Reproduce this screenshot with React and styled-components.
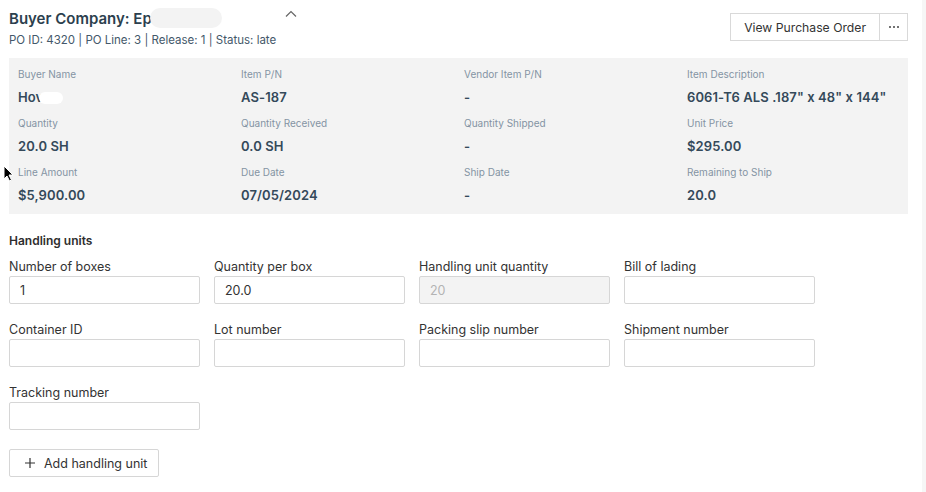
import React from "react";
import styled, { createGlobalStyle } from "styled-components";

const Global = createGlobalStyle`
  html, body { margin: 0; padding: 0; background: #fff; }
  body { font-family: Inter, "Noto Sans", Arial, sans-serif; -webkit-font-smoothing: antialiased; }
  * { box-sizing: border-box; }
`;

const Page = styled.div`
  display: flex;
  width: 926px;
  height: 492px;
  overflow: hidden;
  position: relative;
`;

const Main = styled.div`
  flex: 1;
  padding: 0 14px 0 9px;
`;

const Track = styled.div`
  width: 4px;
  background: #f6f6f6;
`;

const Header = styled.div`
  display: flex;
  justify-content: space-between;
  align-items: flex-start;
  padding-top: 7px;
  height: 58px;
`;

const TitleRow = styled.div`
  display: flex;
  align-items: center;
  height: 22px;
`;

const Title = styled.h1`
  margin: 0;
  font-size: 15px;
  font-weight: 600;
  color: #2c3f4e;
`;

const Blob = styled.span`
  display: inline-block;
  width: ${(p) => p.$w}px;
  height: ${(p) => p.$h}px;
  border-radius: ${(p) => p.$h / 2}px;
  background: ${(p) => p.$bg};
  vertical-align: middle;
  margin-left: ${(p) => p.$ml || 0}px;
`;

const Caret = styled.svg`
  margin-left: 63px;
  margin-top: -8px;
`;

const Sub = styled.div`
  margin-top: 4px;
  font-size: 11.5px;
  color: #44586a;
`;

const BtnGroup = styled.div`
  display: flex;
  margin-top: 6px;
`;

const GroupBtn = styled.button`
  height: 28px;
  padding: 0 ${(p) => p.$px}px;
  width: ${(p) => (p.$w ? `${p.$w}px` : "auto")};
  background: #fff;
  border: 1px solid #d9d9d9;
  margin-left: ${(p) => (p.$last ? "-1px" : "0")};
  font-family: inherit;
  font-size: 12.2px;
  color: #333;
  display: flex;
  align-items: center;
  justify-content: center;
`;

const Panel = styled.div`
  background: #f3f3f3;
  padding: 9px 9px 9px;
  display: grid;
  grid-template-columns: repeat(4, 212px);
  column-gap: 11px;
  row-gap: 9px;
`;

const Field = styled.div`
  display: flex;
  flex-direction: column;
`;

const InfoLabel = styled.div`
  font-size: 10px;
  color: #8493a3;
  height: 14px;
  line-height: 14px;
`;

const InfoValue = styled.div`
  margin-top: 7px;
  font-size: 13px;
  font-weight: 600;
  color: #34495a;
  height: 19px;
  line-height: 19px;
  letter-spacing: 0.1px;
  display: flex;
  align-items: center;
`;

const Section = styled.div`
  margin-top: 19px;
  font-size: 12px;
  font-weight: 600;
  color: #2e2e2e;
`;

const Form = styled.div`
  margin-top: 11px;
  display: grid;
  grid-template-columns: repeat(4, 191px);
  column-gap: 14px;
  row-gap: 18px;
`;

const FLabel = styled.label`
  font-size: 12.5px;
  color: #333;
  height: 15px;
  line-height: 15px;
  margin-bottom: 2px;
`;

const Input = styled.input`
  height: 28px;
  width: 191px;
  border: 1px solid #d6d6d6;
  border-radius: 2px;
  background: ${(p) => (p.disabled ? "#f3f3f3" : "#fff")};
  padding: 0 10px;
  font-family: inherit;
  font-size: 12.5px;
  color: ${(p) => (p.disabled ? "#b3b3b3" : "#333")};
  outline: none;
  &:disabled { -webkit-text-fill-color: #b3b3b3; opacity: 1; }
`;

const AddBtn = styled.button`
  margin-top: 19px;
  height: 28px;
  width: 150px;
  background: #fff;
  border: 1px solid #d6d6d6;
  border-radius: 2px;
  font-family: inherit;
  font-size: 12.5px;
  color: #333;
  display: flex;
  align-items: center;
  gap: 8px;
  padding: 0 0 0 14px;
`;

const Cursor = styled.svg`
  position: absolute;
  left: 3px;
  top: 165px;
`;

const info = [
  ["Buyer Name", "Hov", true],
  ["Item P/N", "AS-187"],
  ["Vendor Item P/N", "-"],
  ["Item Description", '6061-T6 ALS .187" x 48" x 144"'],
  ["Quantity", "20.0 SH"],
  ["Quantity Received", "0.0 SH"],
  ["Quantity Shipped", "-"],
  ["Unit Price", "$295.00"],
  ["Line Amount", "$5,900.00"],
  ["Due Date", "07/05/2024"],
  ["Ship Date", "-"],
  ["Remaining to Ship", "20.0"],
];

const fields = [
  ["Number of boxes", "1"],
  ["Quantity per box", "20.0"],
  ["Handling unit quantity", "20", true],
  ["Bill of lading", ""],
  ["Container ID", ""],
  ["Lot number", ""],
  ["Packing slip number", ""],
  ["Shipment number", ""],
  ["Tracking number", ""],
];

export default function App() {
  return (
    <Page>
      <Global />
      <Main>
        <Header>
          <div>
            <TitleRow>
              <Title>Buyer Company: Ep</Title>
              <Blob $w={72} $h={20} $bg="#f3f3f3" $ml={-2} />
              <Caret width="12" height="8" viewBox="0 0 12 8">
                <path d="M1 6.5 L6 1.5 L11 6.5" fill="none" stroke="#666" strokeWidth="1.2" />
              </Caret>
            </TitleRow>
            <Sub>PO ID: 4320 | PO Line: 3 | Release: 1 | Status: late</Sub>
          </div>
          <BtnGroup>
            <GroupBtn $px={13}>View Purchase Order</GroupBtn>
            <GroupBtn $px={0} $w={29} $last>
              <svg width="12" height="4" viewBox="0 0 12 4">
                <circle cx="2" cy="2" r="1" fill="#444" />
                <circle cx="6" cy="2" r="1" fill="#444" />
                <circle cx="10" cy="2" r="1" fill="#444" />
              </svg>
            </GroupBtn>
          </BtnGroup>
        </Header>
        <Panel>
          {info.map(([l, v, redact]) => (
            <Field key={l}>
              <InfoLabel>{l}</InfoLabel>
              <InfoValue>
                {v}
                {redact && <Blob $w={24} $h={12} $bg="#fff" $ml={-4} />}
              </InfoValue>
            </Field>
          ))}
        </Panel>
        <Section>Handling units</Section>
        <Form>
          {fields.map(([l, v, dis]) => (
            <Field key={l}>
              <FLabel>{l}</FLabel>
              <Input defaultValue={v} disabled={dis} readOnly={!dis} />
            </Field>
          ))}
        </Form>
        <AddBtn>
          <svg width="12" height="12" viewBox="0 0 12 12">
            <path d="M6 1 V11 M1 6 H11" stroke="#333" strokeWidth="1.2" />
          </svg>
          Add handling unit
        </AddBtn>
      </Main>
      <Track />
      <Cursor width="11" height="17" viewBox="0 0 11 17">
        <path d="M1 1 L1 14 L4 11 L6.5 16 L8.5 15 L6 10 L10 10 Z" fill="#000" stroke="#fff" strokeWidth="1" />
      </Cursor>
    </Page>
  );
}
